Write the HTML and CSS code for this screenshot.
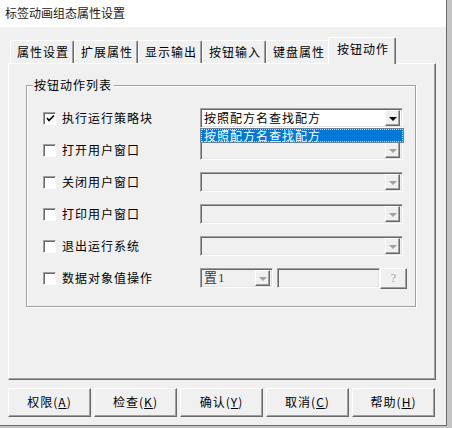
FILE: index.html
```html
<!DOCTYPE html>
<html lang="zh-CN">
<head>
    <meta charset="UTF-8">
    <title>标签动画组态属性设置</title>
    <link rel="stylesheet" href="styles.css">
</head>
<body>
    <div class="window">
        <div class="titlebar">标签动画组态属性设置</div>

        <div class="tabs">
            <div class="tab">属性设置</div>
            <div class="tab">扩展属性</div>
            <div class="tab">显示输出</div>
            <div class="tab">按钮输入</div>
            <div class="tab">键盘属性</div>
            <div class="tab active">按钮动作</div>
        </div>

        <div class="panel">
            <div class="group">
                <span class="legend">按钮动作列表</span>

                <div class="row">
                    <span class="check checked">
                        <svg width="9" height="9" viewBox="0 0 9 9"><path d="M1 4 L3 6.5 L8 1.5" fill="none" stroke="#000" stroke-width="1.6"/></svg>
                    </span>
                    <span class="label">执行运行策略块</span>
                    <div class="combo">
                        <span class="combo-text">按照配方名查找配方</span>
                        <span class="drop"><i class="arrow"></i></span>
                    </div>
                </div>

                <div class="row">
                    <span class="check"></span>
                    <span class="label">打开用户窗口</span>
                    <div class="combo disabled">
                        <span class="combo-text"></span>
                        <span class="drop"><i class="arrow"></i></span>
                    </div>
                </div>

                <div class="row">
                    <span class="check"></span>
                    <span class="label">关闭用户窗口</span>
                    <div class="combo disabled">
                        <span class="combo-text"></span>
                        <span class="drop"><i class="arrow"></i></span>
                    </div>
                </div>

                <div class="row">
                    <span class="check"></span>
                    <span class="label">打印用户窗口</span>
                    <div class="combo disabled">
                        <span class="combo-text"></span>
                        <span class="drop"><i class="arrow"></i></span>
                    </div>
                </div>

                <div class="row">
                    <span class="check"></span>
                    <span class="label">退出运行系统</span>
                    <div class="combo disabled">
                        <span class="combo-text"></span>
                        <span class="drop"><i class="arrow"></i></span>
                    </div>
                </div>

                <div class="row">
                    <span class="check"></span>
                    <span class="label">数据对象值操作</span>
                    <div class="combo disabled small">
                        <span class="combo-text dark">置1</span>
                        <span class="drop"><i class="arrow"></i></span>
                    </div>
                    <div class="edit"></div>
                    <div class="qbtn">?</div>
                </div>

                <div class="dropdown-list">
                    <span class="item">按照配方名查找配方</span>
                </div>
            </div>
        </div>

        <div class="buttons">
            <div class="btn">权限(<u>A</u>)</div>
            <div class="btn">检查(<u>K</u>)</div>
            <div class="btn">确认(<u>Y</u>)</div>
            <div class="btn">取消(<u>C</u>)</div>
            <div class="btn">帮助(<u>H</u>)</div>
        </div>
    </div>
</body>
</html>
```

FILE: styles.css
```css
* {
    box-sizing: border-box;
}

body {
    margin: 0;
    width: 452px;
    height: 428px;
    background: #c4c4c4;
    font-family: "Noto Sans CJK SC", "Liberation Sans", sans-serif;
    font-size: 12px;
    color: #000;
    overflow: hidden;
}

.window {
    width: 447px;
    height: 426px;
    background: #f0f0f0;
    border-right: 1px solid #6a6a6a;
    border-bottom: 1px solid #6a6a6a;
}

.titlebar {
    height: 27px;
    background: #fff;
    padding-left: 5px;
    line-height: 25px;
    font-size: 12px;
    color: #1a1a1a;
}

/* tabs */
.tabs {
    display: flex;
    align-items: flex-end;
    height: 36px;
    padding-left: 10px;
    padding-top: 10px;
}

.tab {
    width: 64px;
    height: 23px;
    padding-left: 6px;
    line-height: 22px;
    letter-spacing: 1px;
    border-top: 1px solid #fff;
    border-left: 1px solid #fff;
    border-right: 1px solid #6a6a6a;
    box-shadow: inset -1px 0 0 #a0a0a0;
    border-radius: 2px 2px 0 0;
    background: #f0f0f0;
}

.tab.active {
    position: relative;
    width: 68px;
    height: 27px;
    margin-left: -2px;
    margin-bottom: -1px;
    padding-left: 8px;
    line-height: 22px;
    z-index: 2;
}

/* panel */
.panel {
    position: relative;
    width: 428px;
    height: 317px;
    margin-left: 8px;
    border-top: 1px solid #fff;
    border-left: 1px solid #fff;
    border-right: 1px solid #6a6a6a;
    border-bottom: 1px solid #6a6a6a;
    box-shadow: inset -1px -1px 0 #a0a0a0;
    padding-top: 21px;
    padding-left: 17px;
}

.group {
    position: relative;
    width: 390px;
    height: 222px;
    border: 1px solid #a0a0a0;
    box-shadow: inset 1px 1px 0 #fff, 1px 1px 0 #fff;
    padding: 22px 0 18px 16px;
    display: flex;
    flex-direction: column;
    gap: 12px;
}

.legend {
    position: absolute;
    top: -9px;
    left: 6px;
    padding: 0 2px 0 1px;
    background: #f0f0f0;
    letter-spacing: 1px;
    line-height: 16px;
}

.row {
    display: flex;
    align-items: center;
    height: 20px;
}

.check {
    width: 13px;
    height: 13px;
    margin-right: 6px;
    background: #fff;
    border-top: 1px solid #a0a0a0;
    border-left: 1px solid #a0a0a0;
    border-right: 1px solid #fff;
    border-bottom: 1px solid #fff;
    box-shadow: inset 1px 1px 0 #696969, 0 0 0 0 transparent;
    display: flex;
    align-items: center;
    justify-content: center;
}

.check svg {
    margin: 1px 0 0 1px;
}

.label {
    width: 138px;
    letter-spacing: 1px;
    line-height: 16px;
}

.combo {
    position: relative;
    width: 203px;
    height: 20px;
    background: #fff;
    border-top: 1px solid #a0a0a0;
    border-left: 1px solid #a0a0a0;
    border-right: 1px solid #fff;
    border-bottom: 1px solid #fff;
    box-shadow: inset 1px 1px 0 #696969, inset -1px -1px 0 #e3e3e3;
    display: flex;
    align-items: center;
}

.combo.disabled {
    background: #f0f0f0;
}

.combo.small {
    width: 73px;
}

.combo-text {
    flex: 1;
    padding-left: 3px;
    letter-spacing: 1px;
    line-height: 16px;
    white-space: nowrap;
}

.combo-text.dark {
    color: #3a3a3a;
    font-family: "Liberation Serif", "Noto Sans CJK SC", serif;
    font-size: 13px;
}

.drop {
    width: 15px;
    height: 16px;
    margin-right: 2px;
    background: #f0f0f0;
    border-top: 1px solid #fff;
    border-left: 1px solid #fff;
    border-right: 1px solid #696969;
    border-bottom: 1px solid #696969;
    box-shadow: inset -1px -1px 0 #a0a0a0;
    display: flex;
    align-items: center;
    justify-content: center;
}

.arrow {
    width: 0;
    height: 0;
    margin-top: 1px;
    border-left: 4px solid transparent;
    border-right: 4px solid transparent;
    border-top: 4px solid #000;
}

.disabled .arrow {
    border-top-color: #a0a0a0;
}

.edit {
    width: 103px;
    height: 20px;
    margin-left: 4px;
    background: #f0f0f0;
    border-top: 1px solid #a0a0a0;
    border-left: 1px solid #a0a0a0;
    border-right: 1px solid #fff;
    border-bottom: 1px solid #fff;
    box-shadow: inset 1px 1px 0 #696969, inset -1px -1px 0 #e3e3e3;
}

.qbtn {
    width: 27px;
    height: 21px;
    background: #f0f0f0;
    border-top: 1px solid #fff;
    border-left: 1px solid #fff;
    border-right: 1px solid #696969;
    border-bottom: 1px solid #696969;
    box-shadow: inset -1px -1px 0 #a0a0a0;
    color: #a0a0a0;
    font-family: "Liberation Serif", serif;
    font-size: 12px;
    text-align: center;
    line-height: 19px;
}

.dropdown-list {
    position: absolute;
    left: 173px;
    top: 42px;
    width: 204px;
    height: 15px;
    background: #0078d7;
    border: 1px solid #6b7f99;
    z-index: 3;
}

.dropdown-list .item {
    display: block;
    height: 13px;
    padding-left: 2px;
    border: 1px dotted #c9dcf0;
    color: #fff;
    letter-spacing: 1px;
    line-height: 11px;
    white-space: nowrap;
}

/* bottom buttons */
.buttons {
    display: flex;
    gap: 3px;
    margin-top: 8px;
    margin-left: 8px;
}

.btn {
    width: 83px;
    height: 29px;
    background: #f0f0f0;
    border-top: 1px solid #fff;
    border-left: 1px solid #fff;
    border-right: 1px solid #696969;
    border-bottom: 1px solid #696969;
    box-shadow: inset -1px -1px 0 #a0a0a0;
    text-align: center;
    line-height: 26px;
    letter-spacing: 1px;
}

.btn u {
    text-underline-offset: 1px;
}
```
